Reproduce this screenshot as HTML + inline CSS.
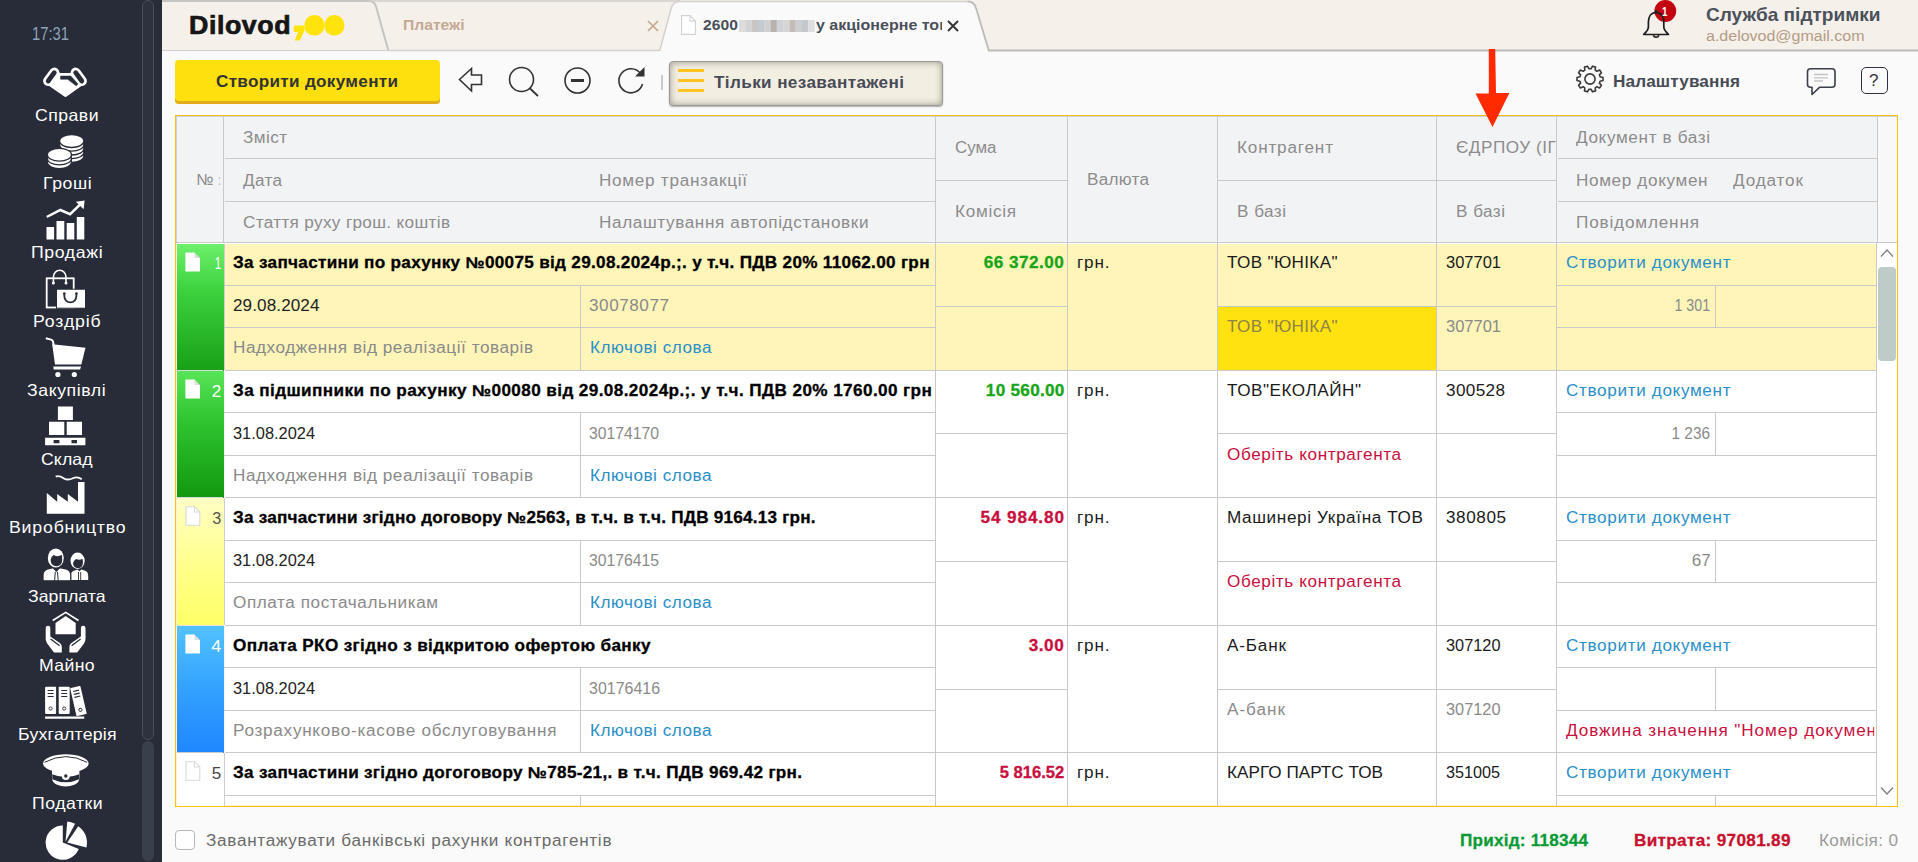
<!DOCTYPE html>
<html><head><meta charset="utf-8"><title>Dilovod</title>
<style>
html,body{margin:0;padding:0}
body{width:1918px;height:862px;overflow:hidden;position:relative;background:#fafafa;font-family:"Liberation Sans",sans-serif}
.b{position:absolute}
.t{position:absolute;white-space:nowrap;line-height:24px;transform-origin:0 50%}
svg{position:absolute;overflow:visible}
</style></head><body>
<div class="b" style="left:162px;top:0px;width:1756px;height:50px;background:#f5f0ea;"></div>
<div class="b" style="left:162px;top:50px;width:1756px;height:1px;background:#cfcfcf;"></div>
<div class="b" style="left:162px;top:51px;width:1756px;height:64px;background:#fafafa;"></div>
<svg style="left:162px;top:0" width="1756" height="52" viewBox="162 0 1756 52">
<path d="M162 1H369q5.500 0 7 5.500L388.200 50" fill="none" stroke="#c6c4c1" stroke-width="2"/>
<path d="M659.500 51L671.300 8q1.800-6.500 8.500-6.500H967.500q6.700 0 8.500 6.500L988.800 51z" fill="#fafafa"/>
<path d="M388 50.500H659.700L671.300 8q1.800-6.500 8.500-6.500H967.500" fill="none" stroke="#d4d1cd" stroke-width="1.500"/>
<path d="M967.500 1.500q6.700 0 8.500 6.500L988.800 50.500H1918" fill="none" stroke="#bdbbb8" stroke-width="1.800"/>
<path d="M369 1H680" fill="none" stroke="#cfccc8" stroke-width="1.600"/>
</svg>
<svg style="left:292px;top:12px" width="56" height="34" viewBox="0 0 56 34"><rect x="12.4" y="3.1" width="20" height="20.4" rx="9.6" fill="#ffe30a"/><rect x="32.4" y="3.1" width="20" height="20.4" rx="9.6" fill="#ffe30a"/><path d="M3.2 13.600h7.800q1.500 0 1.500 1.500v3.600l-4.800 9.900H2.800l3.200-8.700H3.200q-1.500 0-1.500-1.500v-3.300q0-1.500 1.500-1.500z" fill="#ffe30a"/></svg>
<svg style="left:646.8px;top:20.2px" width="12" height="12" viewBox="0 0 12 12"><path d="M1 1l10 10M11 1L1 11" stroke="#c3a791" stroke-width="1.7" fill="none"/></svg>
<svg style="left:681px;top:15px" width="15" height="20" viewBox="0 0 15 20"><path d="M.6 .6h8.400l5.400 5.400v13.400H.6z" fill="#fff" stroke="#d2d2d2" stroke-width="1.100"/><path d="M9 .6v5.400h5.400" fill="none" stroke="#d2d2d2" stroke-width="1.100"/></svg>
<svg style="left:739px;top:19.5px" width="76" height="12" viewBox="0 0 76 12"><rect x="0.0" y="0" width="6.4" height="12" fill="#dcdcdc"/><rect x="6.3" y="0" width="6.4" height="12" fill="#d3d3d3"/><rect x="12.6" y="0" width="6.4" height="12" fill="#c9c5c2"/><rect x="18.9" y="0" width="6.4" height="12" fill="#c2cad2"/><rect x="25.2" y="0" width="6.4" height="12" fill="#d0d0d0"/><rect x="31.5" y="0" width="6.4" height="12" fill="#b9b1ab"/><rect x="37.8" y="0" width="6.4" height="12" fill="#cfd2d6"/><rect x="44.1" y="0" width="6.4" height="12" fill="#d6d6d6"/><rect x="50.4" y="0" width="6.4" height="12" fill="#c4bdb7"/><rect x="56.7" y="0" width="6.4" height="12" fill="#cdcfd3"/><rect x="63.0" y="0" width="6.4" height="12" fill="#c3c7ce"/><rect x="69.3" y="0" width="6.4" height="12" fill="#dedede"/></svg>
<div class="b" style="left:908px;top:12px;width:36px;height:28px;background:linear-gradient(90deg,rgba(250,250,250,0),rgba(250,250,250,.75) 45%,#fafafa 80%);"></div>
<svg style="left:947px;top:20.2px" width="12" height="12" viewBox="0 0 12 12"><path d="M1 1l10 10M11 1L1 11" stroke="#333" stroke-width="1.9" fill="none"/></svg>
<svg style="left:1640px;top:0" width="40" height="42" viewBox="0 0 40 42">
<circle cx="25.300" cy="11" r="10.900" fill="#c20410"/>
<path d="M16.100 12.700C10.600 12.700 8.400 17 8.400 22V27C8.400 30 5.600 32.600 3.700 34.500H28.500C26.600 32.600 23.800 30 23.800 27V22C23.800 17 21.600 12.700 16.100 12.700Z" fill="none" stroke="#1f1f1f" stroke-width="1.700" stroke-linejoin="round"/>
<circle cx="16.100" cy="11.400" r="1.500" fill="#1f1f1f"/>
<path d="M13.300 35.300a2.900 2.700 0 0 0 5.600 0" fill="none" stroke="#1f1f1f" stroke-width="1.600"/>
</svg>
<div class="b" style="left:175px;top:60px;width:265px;height:44px;background:#ffe00f;border-radius:4px;box-shadow:inset 0 -3px 0 #e3ac1d;"></div>
<svg style="left:457px;top:65px" width="28" height="30" viewBox="0 0 28 30"><path d="M2.500 14.500L14.500 3.500v6.500h10v9.500h-10v6.500z" fill="none" stroke="#333" stroke-width="1.600" stroke-linejoin="miter"/></svg>
<svg style="left:506px;top:65px" width="36" height="34" viewBox="0 0 36 34"><circle cx="15.500" cy="14.500" r="12" fill="none" stroke="#333" stroke-width="1.600"/><path d="M24 23.500l8 7.500" stroke="#333" stroke-width="1.800" fill="none"/></svg>
<svg style="left:563px;top:66px" width="30" height="30" viewBox="0 0 30 30"><circle cx="14.500" cy="14.500" r="12.500" fill="none" stroke="#333" stroke-width="1.600"/><path d="M8 14.500h13" stroke="#333" stroke-width="3" fill="none"/></svg>
<svg style="left:616px;top:64px" width="32" height="32" viewBox="0 0 32 32"><path d="M24.500 9.500A12 12 0 1 0 26.500 20" fill="none" stroke="#333" stroke-width="1.600"/><path d="M28.500 3v9.500H19z" fill="#333"/></svg>
<div class="b" style="left:661px;top:75px;width:1.5px;height:15px;background:#c9c9c9;"></div>
<div class="b" style="left:669px;top:61px;width:274px;height:45px;background:#f3eee2;box-sizing:border-box;border:1.5px solid #9a9996;border-radius:4px;box-shadow:inset 0 0 7px rgba(60,58,50,.5),0 1px 1.5px rgba(0,0,0,.3);"></div>
<div class="b" style="left:677.5px;top:69px;width:26.8px;height:3px;background:#ffc21e;"></div>
<div class="b" style="left:677.5px;top:79.1px;width:26.8px;height:3px;background:#ffc21e;"></div>
<div class="b" style="left:677.5px;top:88.6px;width:26.8px;height:3px;background:#ffc21e;"></div>
<svg style="left:1575px;top:64.3px" width="30" height="30" viewBox="-15 -15 30 30">
<g fill="none" stroke="#3a3a3a" stroke-width="1.6" stroke-linejoin="round">
<path d="M10.06 -2.20L13.01 -1.57L13.01 1.57L10.06 2.20L9.43 4.14L11.44 6.38L9.60 8.91L6.85 7.69L5.20 8.89L5.51 11.88L2.53 12.85L1.02 10.25L-1.02 10.25L-2.53 12.85L-5.51 11.88L-5.20 8.89L-6.85 7.69L-9.60 8.91L-11.44 6.38L-9.43 4.14L-10.06 2.20L-13.01 1.57L-13.01 -1.57L-10.06 -2.20L-9.43 -4.14L-11.44 -6.38L-9.60 -8.91L-6.85 -7.69L-5.20 -8.89L-5.51 -11.88L-2.53 -12.85L-1.02 -10.25L1.02 -10.25L2.53 -12.85L5.51 -11.88L5.20 -8.89L6.85 -7.69L9.60 -8.91L11.44 -6.38L9.43 -4.14z"/>
<circle r="5.1"/>
</g></svg>
<svg style="left:1806px;top:67px" width="32" height="30" viewBox="0 0 32 30"><path d="M4.500 1.800h21.500a3 3 0 0 1 3 3v12.500a3 3 0 0 1-3 3H13.500L6 27.500V20.300H4.500a3 3 0 0 1-3-3V4.800a3 3 0 0 1 3-3z" fill="none" stroke="#3a3f49" stroke-width="1.600" stroke-linejoin="round"/><path d="M8 7.500h14M8 10.800h14M8 14h9" stroke="#c4c4c4" stroke-width="1.300"/></svg>
<div class="b" style="left:1861px;top:67px;width:27px;height:27px;box-sizing:border-box;border:1.8px solid #2f333b;border-radius:5px;"></div>
<div class="b" style="left:175px;top:115px;width:1723px;height:692px;background:#fff;box-sizing:border-box;border:1px solid #fbbf14;box-shadow:inset 1px 0 0 rgba(251,191,20,.22), inset -1px -1px 0 rgba(251,191,20,.25);"></div>
<div class="b" style="left:176px;top:116px;width:1721px;height:127px;background:#cdd1db;"></div>
<div class="b" style="left:177px;top:117px;width:1700px;height:125px;background:#f2f3f5;"></div>
<div class="b" style="left:1878px;top:117px;width:19px;height:125px;background:#f8f8f8;"></div>
<div class="b" style="left:1877px;top:243px;width:20px;height:563px;background:#fff;"></div>
<div class="b" style="left:223px;top:116px;width:1px;height:126px;background:#c9c9c9;"></div>
<div class="b" style="left:935px;top:116px;width:1px;height:126px;background:#c9c9c9;"></div>
<div class="b" style="left:1067px;top:116px;width:1px;height:126px;background:#c9c9c9;"></div>
<div class="b" style="left:1217px;top:116px;width:1px;height:126px;background:#c9c9c9;"></div>
<div class="b" style="left:1436px;top:116px;width:1px;height:126px;background:#c9c9c9;"></div>
<div class="b" style="left:1556px;top:116px;width:1px;height:126px;background:#c9c9c9;"></div>
<div class="b" style="left:1877px;top:116px;width:1px;height:126px;background:#c9c9c9;"></div>
<div class="b" style="left:225px;top:158px;width:710px;height:1px;background:#c9c9c9;"></div>
<div class="b" style="left:225px;top:201px;width:710px;height:1px;background:#c9c9c9;"></div>
<div class="b" style="left:1558px;top:158px;width:319px;height:1px;background:#c9c9c9;"></div>
<div class="b" style="left:1558px;top:201px;width:319px;height:1px;background:#c9c9c9;"></div>
<div class="b" style="left:936px;top:180px;width:131px;height:1px;background:#c9c9c9;"></div>
<div class="b" style="left:1218px;top:180px;width:218px;height:1px;background:#c9c9c9;"></div>
<div class="b" style="left:1437px;top:180px;width:119px;height:1px;background:#c9c9c9;"></div>
<div class="b" style="left:176px;top:242px;width:1721px;height:1px;background:#c9c9c9;"></div>
<div class="b" style="left:225px;top:244px;width:1651px;height:126px;background:#fff5b9;"></div>
<div class="b" style="left:177px;top:244px;width:47px;height:127px;background:linear-gradient(#6cf06c,#3fd33f 35%,#16a016);"></div>
<div class="b" style="left:1218px;top:307px;width:218px;height:63px;background:#ffe20f;"></div>
<div class="b" style="left:224px;top:244px;width:1px;height:126px;background:rgba(200,198,204,.9);"></div>
<div class="b" style="left:935px;top:243px;width:1px;height:127px;background:#c9c9c9;"></div>
<div class="b" style="left:1067px;top:243px;width:1px;height:127px;background:#c9c9c9;"></div>
<div class="b" style="left:1217px;top:243px;width:1px;height:127px;background:#c9c9c9;"></div>
<div class="b" style="left:1436px;top:243px;width:1px;height:127px;background:#c9c9c9;"></div>
<div class="b" style="left:1556px;top:243px;width:1px;height:127px;background:#c9c9c9;"></div>
<div class="b" style="left:1876px;top:243px;width:1px;height:127px;background:#c9c9c9;"></div>
<div class="b" style="left:224px;top:285px;width:711px;height:1px;background:#c9c9c9;"></div>
<div class="b" style="left:1557px;top:285px;width:319px;height:1px;background:#c9c9c9;"></div>
<div class="b" style="left:580px;top:285px;width:1px;height:85px;background:#c9c9c9;"></div>
<div class="b" style="left:1715px;top:285px;width:1px;height:42px;background:#c9c9c9;"></div>
<div class="b" style="left:224px;top:327px;width:711px;height:1px;background:#c9c9c9;"></div>
<div class="b" style="left:1557px;top:327px;width:319px;height:1px;background:#c9c9c9;"></div>
<div class="b" style="left:936px;top:306px;width:131px;height:1px;background:#c9c9c9;"></div>
<div class="b" style="left:1218px;top:306px;width:218px;height:1px;background:#c9c9c9;"></div>
<div class="b" style="left:1437px;top:306px;width:119px;height:1px;background:#c9c9c9;"></div>
<svg style="left:184.6px;top:252.2px" width="16" height="20" viewBox="0 0 16 20"><path d="M1 0.5h8.5l5.5 5.5v13a.6.6 0 0 1-.6.6H1a.6.6 0 0 1-.6-.6V1.1A.6.6 0 0 1 1 .5z" fill="#fff"/><path d="M9.5 .5v5.5h5.5z" fill="rgba(0,0,0,.13)"/></svg>
<div class="b" style="left:177px;top:371px;width:47px;height:127px;background:linear-gradient(#58e458,#2fc42f 40%,#12980f);"></div>
<div class="b" style="left:177px;top:370px;width:46px;height:1px;background:rgba(225,222,228,.95);"></div>
<div class="b" style="left:224px;top:371px;width:1px;height:126px;background:rgba(230,215,230,.35);"></div>
<div class="b" style="left:935px;top:370px;width:1px;height:127px;background:#c9c9c9;"></div>
<div class="b" style="left:1067px;top:370px;width:1px;height:127px;background:#c9c9c9;"></div>
<div class="b" style="left:1217px;top:370px;width:1px;height:127px;background:#c9c9c9;"></div>
<div class="b" style="left:1436px;top:370px;width:1px;height:127px;background:#c9c9c9;"></div>
<div class="b" style="left:1556px;top:370px;width:1px;height:127px;background:#c9c9c9;"></div>
<div class="b" style="left:1876px;top:370px;width:1px;height:127px;background:#c9c9c9;"></div>
<div class="b" style="left:225px;top:370px;width:1651px;height:1px;background:#c9c9c9;"></div>
<div class="b" style="left:224px;top:412px;width:711px;height:1px;background:#c9c9c9;"></div>
<div class="b" style="left:1557px;top:412px;width:319px;height:1px;background:#c9c9c9;"></div>
<div class="b" style="left:580px;top:412px;width:1px;height:85px;background:#c9c9c9;"></div>
<div class="b" style="left:1715px;top:412px;width:1px;height:43px;background:#c9c9c9;"></div>
<div class="b" style="left:224px;top:455px;width:711px;height:1px;background:#c9c9c9;"></div>
<div class="b" style="left:1557px;top:455px;width:319px;height:1px;background:#c9c9c9;"></div>
<div class="b" style="left:936px;top:433px;width:131px;height:1px;background:#c9c9c9;"></div>
<div class="b" style="left:1218px;top:433px;width:218px;height:1px;background:#c9c9c9;"></div>
<div class="b" style="left:1437px;top:433px;width:119px;height:1px;background:#c9c9c9;"></div>
<svg style="left:184.6px;top:379.2px" width="16" height="20" viewBox="0 0 16 20"><path d="M1 0.5h8.5l5.5 5.5v13a.6.6 0 0 1-.6.6H1a.6.6 0 0 1-.6-.6V1.1A.6.6 0 0 1 1 .5z" fill="#fff"/><path d="M9.5 .5v5.5h5.5z" fill="rgba(0,0,0,.13)"/></svg>
<div class="b" style="left:177px;top:498px;width:47px;height:128px;background:linear-gradient(#ffffc6,#ffff8e 50%,#ffff66);"></div>
<div class="b" style="left:177px;top:497px;width:46px;height:1px;background:rgba(225,222,228,.95);"></div>
<div class="b" style="left:224px;top:498px;width:1px;height:127px;background:rgba(200,198,204,.9);"></div>
<div class="b" style="left:935px;top:497px;width:1px;height:128px;background:#c9c9c9;"></div>
<div class="b" style="left:1067px;top:497px;width:1px;height:128px;background:#c9c9c9;"></div>
<div class="b" style="left:1217px;top:497px;width:1px;height:128px;background:#c9c9c9;"></div>
<div class="b" style="left:1436px;top:497px;width:1px;height:128px;background:#c9c9c9;"></div>
<div class="b" style="left:1556px;top:497px;width:1px;height:128px;background:#c9c9c9;"></div>
<div class="b" style="left:1876px;top:497px;width:1px;height:128px;background:#c9c9c9;"></div>
<div class="b" style="left:225px;top:497px;width:1651px;height:1px;background:#c9c9c9;"></div>
<div class="b" style="left:224px;top:540px;width:711px;height:1px;background:#c9c9c9;"></div>
<div class="b" style="left:1557px;top:540px;width:319px;height:1px;background:#c9c9c9;"></div>
<div class="b" style="left:580px;top:540px;width:1px;height:85px;background:#c9c9c9;"></div>
<div class="b" style="left:1715px;top:540px;width:1px;height:42px;background:#c9c9c9;"></div>
<div class="b" style="left:224px;top:582px;width:711px;height:1px;background:#c9c9c9;"></div>
<div class="b" style="left:1557px;top:582px;width:319px;height:1px;background:#c9c9c9;"></div>
<div class="b" style="left:936px;top:561px;width:131px;height:1px;background:#c9c9c9;"></div>
<div class="b" style="left:1218px;top:561px;width:218px;height:1px;background:#c9c9c9;"></div>
<div class="b" style="left:1437px;top:561px;width:119px;height:1px;background:#c9c9c9;"></div>
<svg style="left:184.6px;top:506.2px" width="16" height="20" viewBox="0 0 16 20"><path d="M1 .7h8.5l5.3 5.3v13.3H1z" fill="#fff" stroke="#d9d9d9" stroke-width="1.1"/><path d="M9.5 .7v5.3h5.3" fill="none" stroke="#d9d9d9" stroke-width="1.1"/></svg>
<div class="b" style="left:177px;top:626px;width:47px;height:127px;background:linear-gradient(#52c2ff,#35a4ff 45%,#1f86ff);"></div>
<div class="b" style="left:177px;top:625px;width:46px;height:1px;background:rgba(225,222,228,.95);"></div>
<div class="b" style="left:224px;top:626px;width:1px;height:126px;background:rgba(230,215,230,.35);"></div>
<div class="b" style="left:935px;top:625px;width:1px;height:127px;background:#c9c9c9;"></div>
<div class="b" style="left:1067px;top:625px;width:1px;height:127px;background:#c9c9c9;"></div>
<div class="b" style="left:1217px;top:625px;width:1px;height:127px;background:#c9c9c9;"></div>
<div class="b" style="left:1436px;top:625px;width:1px;height:127px;background:#c9c9c9;"></div>
<div class="b" style="left:1556px;top:625px;width:1px;height:127px;background:#c9c9c9;"></div>
<div class="b" style="left:1876px;top:625px;width:1px;height:127px;background:#c9c9c9;"></div>
<div class="b" style="left:225px;top:625px;width:1651px;height:1px;background:#c9c9c9;"></div>
<div class="b" style="left:224px;top:667px;width:711px;height:1px;background:#c9c9c9;"></div>
<div class="b" style="left:1557px;top:667px;width:319px;height:1px;background:#c9c9c9;"></div>
<div class="b" style="left:580px;top:667px;width:1px;height:85px;background:#c9c9c9;"></div>
<div class="b" style="left:1715px;top:667px;width:1px;height:43px;background:#c9c9c9;"></div>
<div class="b" style="left:224px;top:710px;width:711px;height:1px;background:#c9c9c9;"></div>
<div class="b" style="left:1557px;top:710px;width:319px;height:1px;background:#c9c9c9;"></div>
<div class="b" style="left:936px;top:689px;width:131px;height:1px;background:#c9c9c9;"></div>
<div class="b" style="left:1218px;top:689px;width:218px;height:1px;background:#c9c9c9;"></div>
<div class="b" style="left:1437px;top:689px;width:119px;height:1px;background:#c9c9c9;"></div>
<svg style="left:184.6px;top:634.2px" width="16" height="20" viewBox="0 0 16 20"><path d="M1 0.5h8.5l5.5 5.5v13a.6.6 0 0 1-.6.6H1a.6.6 0 0 1-.6-.6V1.1A.6.6 0 0 1 1 .5z" fill="#fff"/><path d="M9.5 .5v5.5h5.5z" fill="rgba(0,0,0,.13)"/></svg>
<div class="b" style="left:177px;top:753px;width:47px;height:53px;background:#fff;"></div>
<div class="b" style="left:177px;top:752px;width:46px;height:1px;background:#c9c9c9;"></div>
<div class="b" style="left:224px;top:753px;width:1px;height:53px;background:rgba(200,198,204,.9);"></div>
<div class="b" style="left:935px;top:752px;width:1px;height:54px;background:#c9c9c9;"></div>
<div class="b" style="left:1067px;top:752px;width:1px;height:54px;background:#c9c9c9;"></div>
<div class="b" style="left:1217px;top:752px;width:1px;height:54px;background:#c9c9c9;"></div>
<div class="b" style="left:1436px;top:752px;width:1px;height:54px;background:#c9c9c9;"></div>
<div class="b" style="left:1556px;top:752px;width:1px;height:54px;background:#c9c9c9;"></div>
<div class="b" style="left:1876px;top:752px;width:1px;height:54px;background:#c9c9c9;"></div>
<div class="b" style="left:225px;top:752px;width:1651px;height:1px;background:#c9c9c9;"></div>
<div class="b" style="left:224px;top:795px;width:711px;height:1px;background:#c9c9c9;"></div>
<div class="b" style="left:1557px;top:795px;width:319px;height:1px;background:#c9c9c9;"></div>
<div class="b" style="left:580px;top:795px;width:1px;height:11px;background:#c9c9c9;"></div>
<div class="b" style="left:1715px;top:795px;width:1px;height:11px;background:#c9c9c9;"></div>
<svg style="left:184.6px;top:761.2px" width="16" height="20" viewBox="0 0 16 20"><path d="M1 .7h8.5l5.3 5.3v13.3H1z" fill="#fff" stroke="#d9d9d9" stroke-width="1.1"/><path d="M9.5 .7v5.3h5.3" fill="none" stroke="#d9d9d9" stroke-width="1.1"/></svg>
<div class="b" style="left:1878px;top:266.5px;width:18px;height:94px;background:#bfcbc9;border-radius:4px;"></div>
<svg style="left:1880px;top:248px" width="14" height="10" viewBox="0 0 14 10"><path d="M1 8.5L7 2l6 6.5" fill="none" stroke="#7d7d7d" stroke-width="1.3"/></svg>
<svg style="left:1880px;top:786px" width="14" height="10" viewBox="0 0 14 10"><path d="M1 1.5L7 8l6-6.5" fill="none" stroke="#7d7d7d" stroke-width="1.3"/></svg>
<svg style="left:1470px;top:46px" width="44" height="84" viewBox="0 0 44 84"><path d="M18.800 3h6.400l.8 44H39.400L22.500 81 5.500 47.500H18.800z" fill="#ff2a00"/></svg>
<div class="b" style="left:175px;top:830px;width:20px;height:20px;background:#fff;box-sizing:border-box;border:1.5px solid #b9b9b9;border-radius:4px;"></div>
<div class="b" style="left:0px;top:0px;width:162px;height:862px;background:#272c38;"></div>
<div class="b" style="left:142px;top:741px;width:12px;height:120px;background:#3a404b;border-radius:6px;"></div>
<div class="b" style="left:142px;top:0px;width:12px;height:740px;background:#2d323e;box-sizing:border-box;border:1px solid #474d59;border-radius:6px;"></div>
<svg style="left:36px;top:62.0px" width="60" height="40" viewBox="0 0 60 40"><path d="M18.300 10.700L12.200 19M39.700 10.700L45.800 19" stroke="#fff" stroke-width="10.200" stroke-linecap="round" fill="none"/><path d="M20 9.500L24.400 10.900H34.100L39 9.500 47.500 22.600 31 34.300Q29.500 35.500 28 34.300L11 22.600Z" fill="#fff"/><path d="M18.300 10.700L12.200 19M39.700 10.700L45.800 19" stroke="#272c38" stroke-width="4.800" stroke-linecap="round" fill="none"/><path d="M24.600 14.100H34.800L41.900 21.900 40.200 23.800 31.700 17.200H24.600Z" fill="#272c38" stroke="#272c38" stroke-width=".6" stroke-linejoin="round"/></svg>
<svg style="left:36px;top:130.8px" width="60" height="40" viewBox="0 0 60 40"><ellipse cx="35.7" cy="25" rx="12.2" ry="6.5" fill="#fff" stroke="#272c38" stroke-width="1.3"/><ellipse cx="35.7" cy="21.2" rx="12.2" ry="6.5" fill="#fff" stroke="#272c38" stroke-width="1.3"/><ellipse cx="35.7" cy="17.5" rx="12.2" ry="6.5" fill="#fff" stroke="#272c38" stroke-width="1.3"/><ellipse cx="35.7" cy="13.7" rx="12.2" ry="6.5" fill="#fff" stroke="#272c38" stroke-width="1.3"/><ellipse cx="35.7" cy="10" rx="12.2" ry="6.5" fill="#fff" stroke="#272c38" stroke-width="1.3"/><ellipse cx="23.4" cy="31.3" rx="12.1" ry="6.4" fill="#fff" stroke="#272c38" stroke-width="1.3"/><ellipse cx="23.4" cy="27.5" rx="12.1" ry="6.4" fill="#fff" stroke="#272c38" stroke-width="1.3"/><ellipse cx="23.4" cy="23.76" rx="12.1" ry="6.4" fill="#fff" stroke="#272c38" stroke-width="1.3"/></svg>
<svg style="left:36px;top:199.6px" width="60" height="40" viewBox="0 0 60 40"><path d="M10.500 27h7.600v12.400h-7.600zM20.500 21h7.800v18.400h-7.800zM30.700 23h7.600v16.400h-7.600zM40.800 17h7.500v22.400h-7.500z" fill="#fff"/><path d="M10.700 17L24.400 10l9.700 4.200L44.500 4.200" fill="none" stroke="#fff" stroke-width="2.500"/><path d="M48.600 .4L47.600 9.300 39.800 1.800z" fill="#fff"/></svg>
<svg style="left:36px;top:268.4px" width="60" height="40" viewBox="0 0 60 40"><rect x="10.700" y="10.300" width="27" height="29.200" fill="none" stroke="#fff" stroke-width="1.800"/><path d="M17.400 14.800V9a6.300 6.800 0 0 1 12.600 0V14.800" fill="none" stroke="#fff" stroke-width="1.600"/><circle cx="17.400" cy="15" r="1.500" fill="#fff"/><circle cx="30" cy="15" r="1.500" fill="#fff"/><rect x="20.500" y="21.200" width="29" height="19" fill="#fff" stroke="#272c38" stroke-width="1"/><path d="M28.300 25.500v2.600a6 6.200 0 0 0 12.100 0v-2.600" fill="none" stroke="#272c38" stroke-width="1.800"/><circle cx="28.300" cy="25.500" r="1.300" fill="#272c38"/><circle cx="40.400" cy="25.500" r="1.300" fill="#272c38"/></svg>
<svg style="left:36px;top:337.2px" width="60" height="40" viewBox="0 0 60 40"><path d="M9.800 1.300l5.400 1.300q1.500.4 1.800 1.900L18.400 12" fill="none" stroke="#fff" stroke-width="2"/><path d="M16.200 7.300L49.500 10.800 45.300 27.500H19z" fill="#fff"/><path d="M17.300 29.600H45l-.9 2.800H17.700z" fill="#fff"/><circle cx="21.900" cy="37.500" r="2.600" fill="#fff"/><circle cx="38.300" cy="37.500" r="2.600" fill="#fff"/></svg>
<svg style="left:36px;top:406.0px" width="60" height="40" viewBox="0 0 60 40"><path d="M21.900 .5h15v13.500h-15zM13 15.800h15.300v13.200H13zM30.700 15.800H46v13.200H30.700z" fill="#fff"/><path d="M9.100 31.700h40.300v2.300H9.100zM9.100 37.200h40.300v2H9.100zM9.100 34h8.500v3.200H9.100zM23.400 34h12.100v3.200H23.400zM41 34h8.400v3.200H41z" fill="#fff"/></svg>
<svg style="left:36px;top:474.8px" width="60" height="40" viewBox="0 0 60 40"><path d="M10.800 38.800V18l10.400 8.700V19l10.600 7.700V19L42 26.700V6.900h6.500V38.800z" fill="#fff"/><path d="M19.700 1.600c3-1.200 5.500 0 8.300 1.800s6 1.200 9-.2 5.800-1.200 8.800 1" fill="none" stroke="#fff" stroke-width="1.800"/></svg>
<svg style="left:36px;top:543.6px" width="60" height="40" viewBox="0 0 60 40"><path d="M34.800 36.100V31.500Q34.800 27.500 38.500 26.500L41.500 25.500 43.500 27.200 45.500 25.500 48.500 26.500Q52.200 27.500 52.200 31.500V36.100Z" fill="#fff"/><path d="M42.500 28v8.100M44.700 28v8.100" stroke="#272c38" stroke-width=".9"/><ellipse cx="41.600" cy="16.800" rx="7.100" ry="8.200" fill="#fff"/><path d="M37 19q1-3 3.200-4 3.500 1.500 6.300-.3.500 2 .4 4.300-.2 5-4.900 5.200-4.800-.2-5-5.200z" fill="#272c38"/><path d="M7 36.800V31Q7 26 12 24.800L17 23.500 20.300 26.500 23.600 23.500 29.800 24.800Q34.800 26 34.800 31V36.800Z" fill="#fff" stroke="#272c38" stroke-width="1.300"/><path d="M17.300 24.200L20.300 27.500 23.300 24.200M19.300 27.800L18.600 36.800M21.500 27.800L22.200 36.800" fill="none" stroke="#272c38" stroke-width="1"/><ellipse cx="19.800" cy="14" rx="8" ry="9.600" fill="#fff"/><path d="M14.600 16q.5-3.500 3-5 4.500 2.500 8.200-.3.600 2.300.4 5.300-.3 6-5.800 6.300-5.500-.3-5.800-6.300z" fill="#272c38"/></svg>
<svg style="left:36px;top:612.4px" width="60" height="40" viewBox="0 0 60 40"><path d="M16.700 8.500L29.700 .4 42.500 8.500" fill="none" stroke="#fff" stroke-width="1.700"/><path d="M29.700 3.900L39.700 10.900V22.300H19.500V10.900z" fill="#fff"/><path d="M9.700 16q0-2.300 2.300-2.300t2.300 2.300v8.500l9.500 6.500q2 1.500 2 4v5.400h-7.800l-6.800-8.800q-1.500-2-1.500-4.600z" fill="#fff"/><path d="M9.700 16q0-2.300 2.300-2.300t2.300 2.300v8.500l9.500 6.500q2 1.500 2 4v5.400h-7.800l-6.800-8.800q-1.500-2-1.500-4.600z" fill="#fff" transform="translate(59.200 0) scale(-1 1)"/><path d="M14.600 27l9 6.800M44.600 27l-9 6.800" stroke="#272c38" stroke-width="1.300"/></svg>
<svg style="left:36px;top:681.2px" width="60" height="40" viewBox="0 0 60 40"><rect x="9.1" y="5.700" width="11" height="27.200" rx=".8" fill="#fff"/><path d="M11.6 9.500h6M11.6 12.500h6M11.6 15.500h6" stroke="#272c38" stroke-width="1.200"/><circle cx="14.6" cy="27.500" r="1.600" fill="none" stroke="#272c38" stroke-width=".9"/><rect x="22.7" y="5.700" width="11" height="27.200" rx=".8" fill="#fff"/><path d="M25.2 9.500h6M25.2 12.500h6M25.2 15.500h6" stroke="#272c38" stroke-width="1.200"/><circle cx="28.2" cy="27.500" r="1.600" fill="none" stroke="#272c38" stroke-width=".9"/><g transform="rotate(-13 50.800 32.900)"><rect x="40.300" y="4.200" width="10.500" height="28.700" rx=".8" fill="#fff"/><path d="M42.500 8h6M42.500 11h6M42.500 14h6" stroke="#272c38" stroke-width="1.200"/><circle cx="45.500" cy="27.500" r="1.600" fill="none" stroke="#272c38" stroke-width=".9"/></g><path d="M9.100 35.500h39.100v2.300H9.100z" fill="#fff"/></svg>
<svg style="left:36px;top:750.0px" width="60" height="40" viewBox="0 0 60 40"><ellipse cx="29.800" cy="13.500" rx="22.800" ry="9.300" fill="#fff"/><path d="M8.500 12.300q21.300-11.300 42.600 0" fill="none" stroke="#272c38" stroke-width="1"/><path d="M16 17h27.400v10.500q0 5-4.500 7-9.200 3.800-18.400 0-4.500-2-4.500-7z" fill="#fff"/><path d="M16.300 24.200q13.400 5.800 26.800 0v5q-13.400 6.200-26.800 0z" fill="#272c38"/><circle cx="29.800" cy="26" r="4" fill="#fff"/><circle cx="29.800" cy="26" r="1.700" fill="#272c38"/></svg>
<svg style="left:36px;top:818.8px" width="60" height="40" viewBox="0 0 60 40"><path d="M26.8 23.6L42.75 30.04A17.2 17.2 0 1 1 26.80 6.40Z" fill="#fff"/><path d="M29.5 22.8L31.29 2.38A20.5 20.5 0 0 1 39.12 4.70Z" fill="#fff"/><path d="M31.2 23.6L42.27 7.19A19.8 19.8 0 0 1 50.41 28.39Z" fill="#fff"/></svg>
<span class="t" style="top:13.15px;font-size:25px;color:#161616;font-weight:700;-webkit-text-stroke:0.7px #161616;letter-spacing:0.531px;transform:scaleX(1.0700);left:189.25px;">Dilovod</span>
<span class="t" style="top:12.97px;font-size:15px;color:#c2a994;font-weight:700;transform:scaleX(1.0432);left:403.05px;">Платежі</span>
<span class="t" style="top:13.06px;font-size:14.6px;color:#4a4f5a;font-weight:700;letter-spacing:0.081px;transform:scaleX(1.0700);left:702.8499999999999px;">2600</span>
<span class="t" style="top:13.07px;font-size:15px;color:#4a4f5a;font-weight:700;transform:scaleX(1.0676);left:815.75px;width:118.02px;overflow:hidden;">у акціонерне тов</span>
<span class="t" style="top:0.04px;font-size:13.5px;color:#fff;font-weight:700;transform:scaleX(0.7318);left:1661.55px;">1</span>
<span class="t" style="top:3.14px;font-size:19px;color:#4b505a;font-weight:700;transform:scaleX(1.0026);left:1705.55px;">Служба підтримки</span>
<span class="t" style="top:23.68px;font-size:15.5px;color:#b39c86;transform:scaleX(1.0319);left:1705.55px;">a.delovod@gmail.com</span>
<span class="t" style="top:69.79px;font-size:16px;color:#333333;font-weight:700;letter-spacing:0.287px;transform:scaleX(1.0700);left:216.05px;">Створити документи</span>
<span class="t" style="top:70.79px;font-size:16px;color:#474b57;font-weight:700;letter-spacing:0.357px;transform:scaleX(1.0700);left:713.55px;">Тільки незавантажені</span>
<span class="t" style="top:69.79px;font-size:16px;color:#474b55;font-weight:700;letter-spacing:0.138px;transform:scaleX(1.0700);left:1613.05px;">Налаштування</span>
<span class="t" style="top:68.81px;font-size:17px;color:#2f333b;left:1869.05px;">?</span>
<span class="t" style="top:167.79px;font-size:16px;color:#8c8c8c;transform:scaleX(1.0191);left:196.05px;">№</span>
<span class="t" style="top:167.75px;font-size:14px;color:#bdbdbd;left:217.55px;">:</span>
<span class="t" style="top:125.79px;font-size:16px;color:#8c8c8c;letter-spacing:0.394px;transform:scaleX(1.0700);left:243.05px;">Зміст</span>
<span class="t" style="top:168.79px;font-size:16px;color:#8c8c8c;letter-spacing:0.337px;transform:scaleX(1.0700);left:243.05px;">Дата</span>
<span class="t" style="top:168.79px;font-size:16px;color:#8c8c8c;letter-spacing:0.684px;transform:scaleX(1.0700);left:598.55px;">Номер транзакції</span>
<span class="t" style="top:210.79px;font-size:16px;color:#8c8c8c;letter-spacing:0.331px;transform:scaleX(1.0700);left:243.05px;">Стаття руху грош. коштів</span>
<span class="t" style="top:210.79px;font-size:16px;color:#8c8c8c;letter-spacing:0.591px;transform:scaleX(1.0700);left:598.55px;">Налаштування автопідстановки</span>
<span class="t" style="top:136.29px;font-size:16px;color:#8c8c8c;transform:scaleX(1.0565);left:954.55px;">Сума</span>
<span class="t" style="top:200.29px;font-size:16px;color:#8c8c8c;letter-spacing:0.668px;transform:scaleX(1.0700);left:954.55px;">Комісія</span>
<span class="t" style="top:167.79px;font-size:16px;color:#8c8c8c;letter-spacing:0.267px;transform:scaleX(1.0700);left:1087.05px;">Валюта</span>
<span class="t" style="top:136.29px;font-size:16px;color:#8c8c8c;letter-spacing:0.776px;transform:scaleX(1.0700);left:1237.05px;">Контрагент</span>
<span class="t" style="top:200.29px;font-size:16px;color:#8c8c8c;letter-spacing:0.453px;transform:scaleX(1.0700);left:1237.05px;">В базі</span>
<span class="t" style="top:136.29px;font-size:16px;color:#8c8c8c;letter-spacing:0.507px;transform:scaleX(1.0700);left:1455.55px;width:92.99px;overflow:hidden;">ЄДРПОУ (ІПН)</span>
<span class="t" style="top:200.29px;font-size:16px;color:#8c8c8c;letter-spacing:0.453px;transform:scaleX(1.0700);left:1455.55px;">В базі</span>
<span class="t" style="top:125.79px;font-size:16px;color:#8c8c8c;letter-spacing:0.604px;transform:scaleX(1.0700);left:1575.55px;">Документ в базі</span>
<span class="t" style="top:168.79px;font-size:16px;color:#8c8c8c;letter-spacing:0.605px;transform:scaleX(1.0700);left:1575.55px;width:124.30px;overflow:hidden;">Номер документа</span>
<span class="t" style="top:168.79px;font-size:16px;color:#8c8c8c;letter-spacing:0.820px;transform:scaleX(1.0700);left:1732.55px;">Додаток</span>
<span class="t" style="top:210.79px;font-size:16px;color:#8c8c8c;letter-spacing:0.790px;transform:scaleX(1.0700);left:1575.55px;">Повідомлення</span>
<span class="t" style="top:250.90px;font-size:16.5px;color:#fff;transform:scaleX(0.7075);right:1696.70px;transform-origin:100% 50%;">1</span>
<span class="t" style="top:251.09px;font-size:16px;color:#000;font-weight:700;-webkit-text-stroke:0.3px #000;letter-spacing:0.294px;transform:scaleX(1.0700);left:233.05px;width:654.21px;overflow:hidden;">За запчастини по рахунку №00075 від 29.08.2024р.;. у т.ч. ПДВ 20% 11062.00 грн</span>
<span class="t" style="top:294.09px;font-size:16px;color:#222;letter-spacing:0.085px;transform:scaleX(1.0700);left:233.05px;">29.08.2024</span>
<span class="t" style="top:294.09px;font-size:16px;color:#8a8a8a;letter-spacing:0.511px;transform:scaleX(1.0700);left:588.55px;">30078077</span>
<span class="t" style="top:336.09px;font-size:16px;color:#8a8a8a;letter-spacing:0.516px;transform:scaleX(1.0700);left:233.05px;">Надходження від реалізації товарів</span>
<span class="t" style="top:336.09px;font-size:16px;color:#2b8fc9;letter-spacing:0.490px;transform:scaleX(1.0700);left:589.55px;">Ключові слова</span>
<span class="t" style="top:250.89px;font-size:16px;color:#18a518;font-weight:700;-webkit-text-stroke:0.3px #18a518;letter-spacing:0.447px;transform:scaleX(1.0700);right:853.52px;transform-origin:100% 50%;">66 372.00</span>
<span class="t" style="top:250.89px;font-size:16px;color:#222;letter-spacing:0.786px;transform:scaleX(1.0700);left:1077.05px;">грн.</span>
<span class="t" style="top:250.89px;font-size:16px;color:#1a1a1a;letter-spacing:0.313px;transform:scaleX(1.0700);left:1227.05px;">ТОВ &quot;ЮНІКА&quot;</span>
<span class="t" style="top:250.89px;font-size:16px;color:#1a1a1a;transform:scaleX(1.0301);left:1445.55px;">307701</span>
<span class="t" style="top:250.89px;font-size:16px;color:#2b8fc9;letter-spacing:0.612px;transform:scaleX(1.0700);left:1566.05px;">Створити документ</span>
<span class="t" style="top:315.09px;font-size:16px;color:#8f8348;letter-spacing:0.313px;transform:scaleX(1.0700);left:1227.05px;">ТОВ &quot;ЮНІКА&quot;</span>
<span class="t" style="top:315.09px;font-size:16px;color:#8a8a8a;transform:scaleX(1.0301);left:1445.55px;">307701</span>
<span class="t" style="top:294.09px;font-size:16px;color:#8a8a8a;transform:scaleX(0.8865);right:207.50px;transform-origin:100% 50%;">1 301</span>
<span class="t" style="top:378.90px;font-size:16.5px;color:#fff;transform:scaleX(1.0340);right:1696.70px;transform-origin:100% 50%;">2</span>
<span class="t" style="top:379.09px;font-size:16px;color:#000;font-weight:700;-webkit-text-stroke:0.3px #000;letter-spacing:0.381px;transform:scaleX(1.0700);left:233.05px;width:654.21px;overflow:hidden;">За підшипники по рахунку №00080 від 29.08.2024р.;. у т.ч. ПДВ 20% 1760.00 грн.</span>
<span class="t" style="top:422.09px;font-size:16px;color:#222;transform:scaleX(1.0240);left:233.05px;">31.08.2024</span>
<span class="t" style="top:422.09px;font-size:16px;color:#8a8a8a;transform:scaleX(0.9833);left:588.55px;">30174170</span>
<span class="t" style="top:464.09px;font-size:16px;color:#8a8a8a;letter-spacing:0.516px;transform:scaleX(1.0700);left:233.05px;">Надходження від реалізації товарів</span>
<span class="t" style="top:464.09px;font-size:16px;color:#2b8fc9;letter-spacing:0.490px;transform:scaleX(1.0700);left:589.55px;">Ключові слова</span>
<span class="t" style="top:378.89px;font-size:16px;color:#18a518;font-weight:700;-webkit-text-stroke:0.3px #18a518;letter-spacing:0.272px;transform:scaleX(1.0700);right:853.71px;transform-origin:100% 50%;">10 560.00</span>
<span class="t" style="top:378.89px;font-size:16px;color:#222;letter-spacing:0.786px;transform:scaleX(1.0700);left:1077.05px;">грн.</span>
<span class="t" style="top:378.89px;font-size:16px;color:#1a1a1a;letter-spacing:0.490px;transform:scaleX(1.0700);left:1227.05px;">ТОВ&quot;ЕКОЛАЙН&quot;</span>
<span class="t" style="top:378.89px;font-size:16px;color:#1a1a1a;letter-spacing:0.350px;transform:scaleX(1.0700);left:1445.55px;">300528</span>
<span class="t" style="top:378.89px;font-size:16px;color:#2b8fc9;letter-spacing:0.612px;transform:scaleX(1.0700);left:1566.05px;">Створити документ</span>
<span class="t" style="top:443.09px;font-size:16px;color:#c8103e;letter-spacing:0.579px;transform:scaleX(1.0700);left:1227.05px;">Оберіть контрагента</span>
<span class="t" style="top:422.09px;font-size:16px;color:#8a8a8a;transform:scaleX(0.9614);right:207.50px;transform-origin:100% 50%;">1 236</span>
<span class="t" style="top:506.00px;font-size:16.5px;color:#555;transform:scaleX(0.9796);right:1696.70px;transform-origin:100% 50%;">3</span>
<span class="t" style="top:506.19px;font-size:16px;color:#000;font-weight:700;-webkit-text-stroke:0.3px #000;letter-spacing:0.208px;transform:scaleX(1.0700);left:233.05px;width:654.21px;overflow:hidden;">За запчастини згідно договору №2563, в т.ч. в т.ч. ПДВ 9164.13 грн.</span>
<span class="t" style="top:549.19px;font-size:16px;color:#222;transform:scaleX(1.0240);left:233.05px;">31.08.2024</span>
<span class="t" style="top:549.19px;font-size:16px;color:#8a8a8a;transform:scaleX(0.9833);left:588.55px;">30176415</span>
<span class="t" style="top:591.19px;font-size:16px;color:#8a8a8a;letter-spacing:0.546px;transform:scaleX(1.0700);left:233.05px;">Оплата постачальникам</span>
<span class="t" style="top:591.19px;font-size:16px;color:#2b8fc9;letter-spacing:0.490px;transform:scaleX(1.0700);left:589.55px;">Ключові слова</span>
<span class="t" style="top:505.99px;font-size:16px;color:#c8103e;font-weight:700;-webkit-text-stroke:0.3px #c8103e;letter-spacing:0.856px;transform:scaleX(1.0700);right:853.08px;transform-origin:100% 50%;">54 984.80</span>
<span class="t" style="top:505.99px;font-size:16px;color:#222;letter-spacing:0.786px;transform:scaleX(1.0700);left:1077.05px;">грн.</span>
<span class="t" style="top:505.99px;font-size:16px;color:#1a1a1a;letter-spacing:0.596px;transform:scaleX(1.0700);left:1227.05px;">Машинері Україна ТОВ</span>
<span class="t" style="top:505.99px;font-size:16px;color:#1a1a1a;letter-spacing:0.537px;transform:scaleX(1.0700);left:1445.55px;">380805</span>
<span class="t" style="top:505.99px;font-size:16px;color:#2b8fc9;letter-spacing:0.612px;transform:scaleX(1.0700);left:1566.05px;">Створити документ</span>
<span class="t" style="top:570.19px;font-size:16px;color:#c8103e;letter-spacing:0.579px;transform:scaleX(1.0700);left:1227.05px;">Оберіть контрагента</span>
<span class="t" style="top:549.19px;font-size:16px;color:#8a8a8a;transform:scaleX(1.0676);right:207.50px;transform-origin:100% 50%;">67</span>
<span class="t" style="top:633.80px;font-size:16.5px;color:#fff;transform:scaleX(1.0884);right:1696.70px;transform-origin:100% 50%;">4</span>
<span class="t" style="top:633.99px;font-size:16px;color:#000;font-weight:700;-webkit-text-stroke:0.3px #000;letter-spacing:0.347px;transform:scaleX(1.0700);left:233.05px;width:654.21px;overflow:hidden;">Оплата РКО згідно з відкритою офертою банку</span>
<span class="t" style="top:676.99px;font-size:16px;color:#222;transform:scaleX(1.0240);left:233.05px;">31.08.2024</span>
<span class="t" style="top:676.99px;font-size:16px;color:#8a8a8a;transform:scaleX(0.9974);left:588.55px;">30176416</span>
<span class="t" style="top:718.99px;font-size:16px;color:#8a8a8a;letter-spacing:0.690px;transform:scaleX(1.0700);left:233.05px;">Розрахунково-касове обслуговування</span>
<span class="t" style="top:718.99px;font-size:16px;color:#2b8fc9;letter-spacing:0.490px;transform:scaleX(1.0700);left:589.55px;">Ключові слова</span>
<span class="t" style="top:633.79px;font-size:16px;color:#c8103e;font-weight:700;-webkit-text-stroke:0.3px #c8103e;letter-spacing:0.523px;transform:scaleX(1.0700);right:853.44px;transform-origin:100% 50%;">3.00</span>
<span class="t" style="top:633.79px;font-size:16px;color:#222;letter-spacing:0.786px;transform:scaleX(1.0700);left:1077.05px;">грн.</span>
<span class="t" style="top:633.79px;font-size:16px;color:#1a1a1a;letter-spacing:0.781px;transform:scaleX(1.0700);left:1227.05px;">А-Банк</span>
<span class="t" style="top:633.79px;font-size:16px;color:#1a1a1a;transform:scaleX(1.0208);left:1445.55px;">307120</span>
<span class="t" style="top:633.79px;font-size:16px;color:#2b8fc9;letter-spacing:0.612px;transform:scaleX(1.0700);left:1566.05px;">Створити документ</span>
<span class="t" style="top:697.99px;font-size:16px;color:#8a8a8a;letter-spacing:0.935px;transform:scaleX(1.0700);left:1227.05px;">А-банк</span>
<span class="t" style="top:697.99px;font-size:16px;color:#8a8a8a;transform:scaleX(1.0208);left:1445.55px;">307120</span>
<span class="t" style="top:719.19px;font-size:16px;color:#c8103e;letter-spacing:0.854px;transform:scaleX(1.0700);left:1566.05px;width:288.32px;overflow:hidden;">Довжина значення &quot;Номер документа&quot; перевищує</span>
<span class="t" style="top:761.00px;font-size:16.5px;color:#444;transform:scaleX(1.0340);right:1696.70px;transform-origin:100% 50%;">5</span>
<span class="t" style="top:761.19px;font-size:16px;color:#000;font-weight:700;-webkit-text-stroke:0.3px #000;letter-spacing:0.293px;transform:scaleX(1.0700);left:233.05px;width:654.21px;overflow:hidden;">За запчастини згідно догоговору №785-21,. в т.ч. ПДВ 969.42 грн.</span>
<span class="t" style="top:760.99px;font-size:16px;color:#c8103e;font-weight:700;-webkit-text-stroke:0.3px #c8103e;transform:scaleX(1.0356);right:854.00px;transform-origin:100% 50%;">5 816.52</span>
<span class="t" style="top:760.99px;font-size:16px;color:#222;letter-spacing:0.786px;transform:scaleX(1.0700);left:1077.05px;">грн.</span>
<span class="t" style="top:760.99px;font-size:16px;color:#1a1a1a;letter-spacing:0.029px;transform:scaleX(1.0700);left:1227.05px;">КАРГО ПАРТС ТОВ</span>
<span class="t" style="top:760.99px;font-size:16px;color:#1a1a1a;transform:scaleX(1.0114);left:1445.55px;">351005</span>
<span class="t" style="top:760.99px;font-size:16px;color:#2b8fc9;letter-spacing:0.612px;transform:scaleX(1.0700);left:1566.05px;">Створити документ</span>
<span class="t" style="top:828.79px;font-size:16px;color:#6b6b6b;letter-spacing:0.669px;transform:scaleX(1.0700);left:205.55px;">Завантажувати банківські рахунки контрагентів</span>
<span class="t" style="top:828.59px;font-size:16px;color:#0a9a35;font-weight:700;-webkit-text-stroke:0.3px #0a9a35;letter-spacing:0.210px;transform:scaleX(1.0700);left:1459.55px;">Прихід: 118344</span>
<span class="t" style="top:828.59px;font-size:16px;color:#c8102e;font-weight:700;-webkit-text-stroke:0.3px #c8102e;letter-spacing:0.320px;transform:scaleX(1.0700);left:1633.55px;">Витрата: 97081.89</span>
<span class="t" style="top:828.79px;font-size:16px;color:#9a9a9a;letter-spacing:0.339px;transform:scaleX(1.0700);left:1818.55px;">Комісія: 0</span>
<span class="t" style="top:21.84px;font-size:19px;color:#8ea3b8;transform:scaleX(0.7782);left:32.05px;">17:31</span>
<span class="t" style="top:102.50px;font-size:16.5px;color:#fff;letter-spacing:0.450px;transform:scaleX(1.0700);left:35.449999999999996px;">Справи</span>
<span class="t" style="top:171.30px;font-size:16.5px;color:#fff;letter-spacing:0.539px;transform:scaleX(1.0700);left:43.449999999999996px;">Гроші</span>
<span class="t" style="top:240.10px;font-size:16.5px;color:#fff;letter-spacing:0.593px;transform:scaleX(1.0700);left:31.45px;">Продажі</span>
<span class="t" style="top:308.90px;font-size:16.5px;color:#fff;letter-spacing:0.795px;transform:scaleX(1.0700);left:33.449999999999996px;">Роздріб</span>
<span class="t" style="top:377.70px;font-size:16.5px;color:#fff;letter-spacing:0.547px;transform:scaleX(1.0700);left:27.45px;">Закупівлі</span>
<span class="t" style="top:446.50px;font-size:16.5px;color:#fff;letter-spacing:0.115px;transform:scaleX(1.0700);left:41.449999999999996px;">Склад</span>
<span class="t" style="top:515.30px;font-size:16.5px;color:#fff;letter-spacing:0.785px;transform:scaleX(1.0700);left:9.450000000000001px;">Виробництво</span>
<span class="t" style="top:584.10px;font-size:16.5px;color:#fff;letter-spacing:0.039px;transform:scaleX(1.0700);left:28.45px;">Зарплата</span>
<span class="t" style="top:652.90px;font-size:16.5px;color:#fff;letter-spacing:0.334px;transform:scaleX(1.0700);left:39.449999999999996px;">Майно</span>
<span class="t" style="top:721.70px;font-size:16.5px;color:#fff;letter-spacing:0.238px;transform:scaleX(1.0700);left:18.45px;">Бухгалтерія</span>
<span class="t" style="top:790.50px;font-size:16.5px;color:#fff;letter-spacing:0.479px;transform:scaleX(1.0700);left:32.449999999999996px;">Податки</span>
</body></html>
